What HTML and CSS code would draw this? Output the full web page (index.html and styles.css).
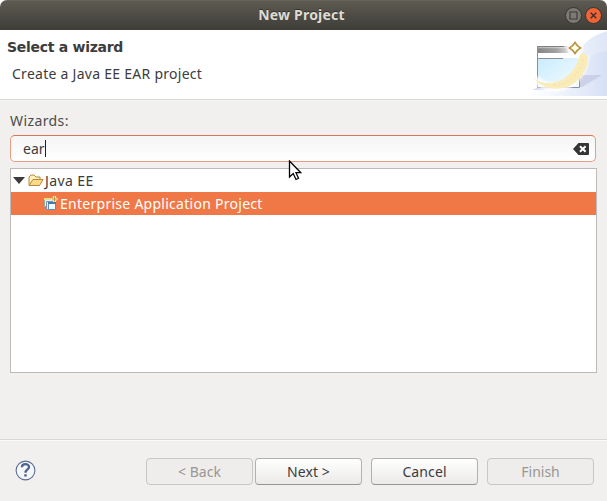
FILE: index.html
```html
<!DOCTYPE html>
<html lang="en">
<head>
<meta charset="utf-8">
<title>New Project</title>
<link rel="stylesheet" href="styles.css">
</head>
<body>
<div class="window">
  <header class="titlebar">
    <h1><span class="t-title">New Project</span></h1>
    <div class="controls">
      <svg width="17" height="17" viewBox="0 0 17 17"><circle cx="8.5" cy="8.5" r="8" fill="#7c7a72" stroke="#35342f"/><path d="M5 5h7v7H5z" fill="none" stroke="#3c3b36" stroke-width="1.2"/></svg>
      <svg width="17" height="17" viewBox="0 0 17 17"><circle cx="8.5" cy="8.5" r="8" fill="#ee6338" stroke="#35342f"/><path d="M5.7 5.7l5.6 5.6M11.3 5.7l-5.6 5.6" stroke="#3c2d26" stroke-width="1.3"/></svg>
    </div>
  </header>
  <section class="banner">
    <div class="banner-text">
      <h2><span class="t-heading">Select a wizard</span></h2>
      <p><span class="t-desc">Create a Java EE EAR project</span></p>
    </div>
    <svg class="banner-art" width="75" height="66" viewBox="0 0 75 66">
      <defs>
        <linearGradient id="sky" x1="0" x2="1"><stop offset="0" stop-color="#fff"/><stop offset="1" stop-color="#d3def5"/></linearGradient>
        <linearGradient id="bar" x1="0" x2="1"><stop offset="0" stop-color="#858585"/><stop offset=".5" stop-color="#a2a2a2"/><stop offset="1" stop-color="#fff"/></linearGradient>
        <linearGradient id="shine" x1="0" x2="0" y1="0" y2="1"><stop offset="0" stop-color="#fff" stop-opacity=".55"/><stop offset=".6" stop-color="#fff" stop-opacity="0"/></linearGradient>
        <linearGradient id="pane" x1="0" y1="0" x2="1" y2="1"><stop offset="0" stop-color="#c9ebfc"/><stop offset="1" stop-color="#f4fcff"/></linearGradient>
        <filter id="soft" x="-20%" y="-20%" width="140%" height="140%"><feGaussianBlur stdDeviation="1.3"/></filter>
      </defs>
      <path d="M75 1C62 5 52 12 44 24L0 54V66H75Z" fill="url(#sky)" opacity=".75"/>
      <path d="M75 21C66 22 58 25 50 31L0 57V66H75Z" fill="url(#sky)" opacity=".7"/>
      <path d="M48 45H70L50 57H38L5 60H0L7 57H48Z" fill="#b6bad8" opacity=".5"/>
      <path d="M5 16H48V57H5Z" fill="#fff"/>
      <path d="M6 28H47V57H6Z" fill="url(#pane)"/>
      <path d="M5 16H44V23H5Z" fill="url(#bar)"/>
      <path d="M6 17H44V20H6Z" fill="url(#shine)"/>
      <path d="M5 16.500H32" stroke="#808080"/>
      <path d="M5.500 16V57.500H47.500V34M5 28.500H31" fill="none" stroke="#8b8f96"/>
      <path d="M3 49C17 64 50 59 53 25" fill="none" stroke="#fff" stroke-width="9" opacity=".8" filter="url(#soft)"/>
      <path d="M2 48C14 59 41 52 47 27Q47 23 51 23Q57 24 56 31C50 62 15 66 2 48Z" fill="#faecb9"/>
      <path d="M22 55C34 56 48 46 51 29" fill="none" stroke="#f5e3ac" stroke-width="1.800" stroke-dasharray="2 2.500"/>
      <circle cx="43" cy="18" r="8" fill="#fff" filter="url(#soft)"/>
      <path d="M43 12.500Q45 16 48.500 18Q45 20 43 23.500Q41 20 37.500 18Q41 16 43 12.500Z" fill="#fffbe8" stroke="#bb9441" stroke-width="1.600"/>
    </svg>
  </section>
  <main class="content">
    <label for="filter"><span class="t-label">Wizards:</span></label>
    <div class="search" id="filter">
      <span class="t-ear">ear</span><i class="caret"></i>
      <svg class="clear" width="16" height="12" viewBox="0 0 16 12"><path d="M5.500 0H15Q16 0 16 1V11Q16 12 15 12H5.500L0 6Z" fill="#353535"/><path d="M7 3.200l5.600 5.600M12.600 3.200L7 8.800" stroke="#fff" stroke-width="2"/></svg>
    </div>
    <div class="tree">
      <div class="row">
        <svg class="arrow" width="12" height="7" viewBox="0 0 12 7"><path d="M0 0H12L6 7Z" fill="#3c3c3c"/></svg>
        <svg class="folder" width="16" height="13" viewBox="0 0 16 13"><path d="M1 11V3L3 1H6L8 3H12V6" fill="#fff0bd" stroke="#b88637"/><path d="M1 11.500L5 5.500H15L11.500 11.500Z" fill="#ffda8a" stroke="#b88637"/></svg>
        <span class="t-java">Java EE</span>
      </div>
      <div class="row selected">
        <svg class="project" width="15" height="15" viewBox="0 0 15 15"><path d="M1.500 2.500H10V10.500H1.500Z" fill="#e4eff0" stroke="#9aa98f"/><path d="M1 2H8V4H1Z" fill="#eadb88"/><path d="M3.500 5.500H11V13.500H3.500Z" fill="#d9effc" stroke="#7d95b4"/><path d="M5.500 6.500H12.500V13.500H5.500Z" fill="#f3fbff" stroke="#5c8dbb"/><path d="M5 6H13V8H5Z" fill="#477bad"/><path d="M11.500 0V6M8.500 3H14.500" stroke="#fff8dc" stroke-width="2.600"/><path d="M11.500 .5V5.500M9 3H14" stroke="#bd922b"/></svg>
        <span class="t-ent">Enterprise Application Project</span>
      </div>
    </div>
  </main>
  <footer class="footer">
    <svg class="help" width="21" height="21" viewBox="0 0 21 21"><circle cx="10.500" cy="10.500" r="9.400" fill="#f5f6f8" stroke="#5b6e93" stroke-width="1.100"/><path d="M6.900 7.200C7 3.200 14 3.200 14 7C14 9.400 10.500 9.500 10.500 12.700" fill="none" stroke="#50648b" stroke-width="2.300"/><path d="M9.200 14.300h2.600v2.200H9.200z" fill="#50648b"/></svg>
    <div class="nav">
      <button class="btn" disabled><span class="t-back">&lt; Back</span></button>
      <button class="btn"><span class="t-next">Next &gt;</span></button>
    </div>
    <button class="btn"><span class="t-cancel">Cancel</span></button>
    <button class="btn" disabled><span class="t-finish">Finish</span></button>
  </footer>
  <svg class="pointer" width="14" height="21" viewBox="0 0 14 21"><path d="M1.500 1V17L5.200 13.500L8 19.500L10.500 18.300L8 12.700H12.800Z" fill="#fff" stroke="#000" stroke-width="1.300"/></svg>
</div>
</body>
</html>
```
FILE: styles.css
```css
* { box-sizing: border-box; }
body { margin: 0; background: #fff; color: #3c3c3c; font: 14px/20px "Noto Sans", "Open Sans", sans-serif; }
h1, h2, p { margin: 0; font-size: 14px; }
svg { display: block; flex: none; }
span { white-space: nowrap; }
.window { position: relative; width: 607px; height: 501px; background: #f1f0ee; display: flex; flex-direction: column; border-radius: 7px 7px 0 0; overflow: hidden; }
.titlebar { height: 30px; flex: none; display: grid; grid-template-columns: 1fr auto 1fr; align-items: center; padding: 0 5px 0 0; background: linear-gradient(#5d5a51, #3e3d38); border-top: 1px solid #65635b; color: #dfdbd2; text-shadow: 0 -1px #33322e; }
.titlebar h1 { grid-column: 2; line-height: 26px; height: 28px; padding-left: 1px; letter-spacing: .2px; }
.controls { display: flex; gap: 3px; justify-self: end; margin-top: -1px; }
.banner { height: 70px; flex: none; display: flex; justify-content: space-between; background: #fff; border-bottom: 1px solid #d7d7d5; }
.banner-text { padding: 7px; }
.banner h2 { font: bold 14px/20px "DejaVu Sans", sans-serif; letter-spacing: -.28px; }
.banner p { padding: 7px 0 0 5px; }
.t-desc, .t-ent { letter-spacing: .27px; }
.t-label, .t-java { letter-spacing: .4px; }
.content { flex: 1; border-top: 1px solid #f8f8f7; padding: 10px 10px 0; }
.content label { display: block; height: 24px; color: #4c4c4c; }
.search { display: flex; align-items: center; width: 586px; height: 27px; padding: 0 6px 0 12px; border: 1px solid #e79c83; border-top-color: #dc7850; border-radius: 5px; background: linear-gradient(#f5f5f5, #fff); }
.caret { width: 1px; height: 17px; background: #222; }
.clear { margin-left: auto; }
.tree { margin-top: 6px; width: 587px; height: 205px; border: 1px solid #bdbbb8; background: #fff; }
.row { height: 23px; display: flex; align-items: center; padding-left: 2px; }
.folder { margin: 0 1px 0 3px; }
.selected { padding-left: 32px; background: #f07746; color: #fff; }
.project { margin-right: 2px; }
.footer { height: 62px; flex: none; border-top: 1px solid #d8d7d5; box-shadow: inset 0 1px #fbfbfa; display: flex; align-items: center; gap: 9px; padding: 2px 13px 0 15px; }
.help { margin: -3px 0 0 0; }
.nav { display: flex; gap: 2px; margin-left: auto; }
.btn { width: 107px; height: 27px; padding: 0; font: inherit; line-height: 25px; color: #3c3c3c; border: 1px solid #b2b1af; border-bottom-color: #969593; border-radius: 4px; background: linear-gradient(#fff, #ebeae8); }
.btn:disabled { color: #999693; background: #eeedeb; border-color: #c8c7c5; }
.t-next { letter-spacing: .1px; }
.t-cancel { letter-spacing: .1px; }
.pointer { position: absolute; left: 288px; top: 160px; }
```
